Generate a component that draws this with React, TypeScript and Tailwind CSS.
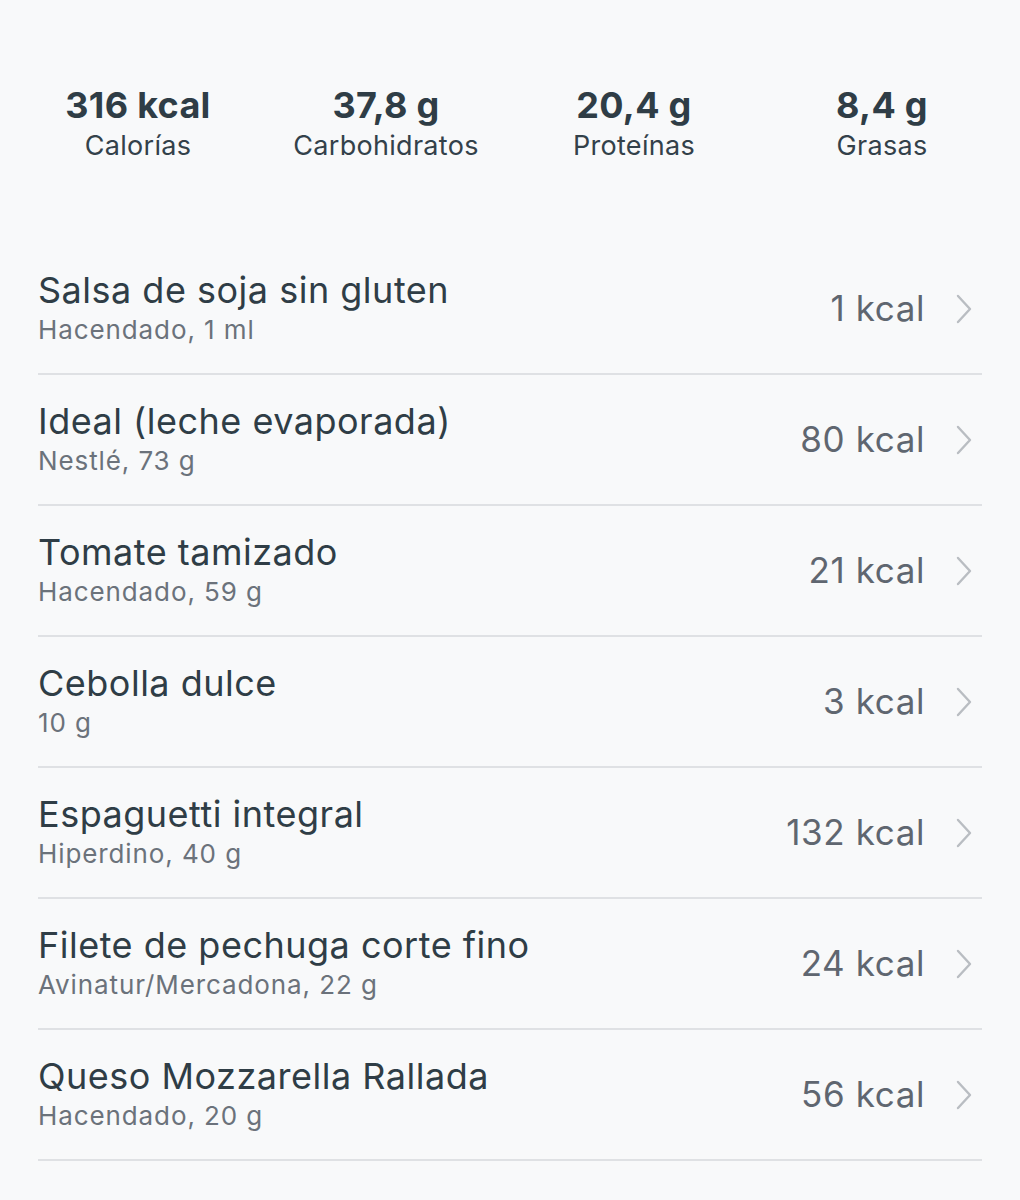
const stats = [
  { value: "316 kcal", label: "Calorías" },
  { value: "37,8 g", label: "Carbohidratos" },
  { value: "20,4 g", label: "Proteínas" },
  { value: "8,4 g", label: "Grasas" },
];

const items = [
  { name: "Salsa de soja sin gluten", detail: "Hacendado, 1 ml", kcal: "1 kcal" },
  { name: "Ideal (leche evaporada)", detail: "Nestlé, 73 g", kcal: "80 kcal" },
  { name: "Tomate tamizado", detail: "Hacendado, 59 g", kcal: "21 kcal" },
  { name: "Cebolla dulce", detail: "10 g", kcal: "3 kcal" },
  { name: "Espaguetti integral", detail: "Hiperdino, 40 g", kcal: "132 kcal" },
  { name: "Filete de pechuga corte fino", detail: "Avinatur/Mercadona, 22 g", kcal: "24 kcal" },
  { name: "Queso Mozzarella Rallada", detail: "Hacendado, 20 g", kcal: "56 kcal" },
];

const Chevron = () => (
  <svg width="18" height="30" viewBox="0 0 18 30" fill="none" className="ml-[30px] mr-[9px]">
    <polyline
      points="3,2 15,15 3,28"
      stroke="#b9bdc2"
      strokeWidth="2.4"
      strokeLinecap="round"
      strokeLinejoin="round"
    />
  </svg>
);

export default function App() {
  return (
    <div className="min-h-[1200px] w-[1020px] bg-[#f8f9fa] font-['Inter','Noto_Sans',sans-serif]">
      {/* Macros */}
      <div className="grid grid-cols-4 px-[14px] pt-[82px] pb-[80px]">
        {stats.map((s) => (
          <div key={s.label} className="flex flex-col items-center">
            <span className="text-[36px] leading-[46px] font-bold tracking-[0.3px] text-[#2f3d46]">
              {s.value}
            </span>
            <span className="text-[27px] leading-[36px] tracking-[0.3px] text-[#33414a]">{s.label}</span>
          </div>
        ))}
      </div>

      {/* Ingredients */}
      <div className="px-[38px]">
        {items.map((it) => (
          <div
            key={it.name}
            className="flex h-[131px] items-center justify-between border-b-2 border-[#dfe1e4]"
          >
            <div className="flex flex-col pt-[2px]">
              <span className="text-[36px] leading-[40px] tracking-[0.5px] text-[#2f3d46]">{it.name}</span>
              <span className="text-[26px] leading-[40px] tracking-[0.9px] text-[#6b727b]">{it.detail}</span>
            </div>
            <div className="flex items-center">
              <span className="text-[35px] tracking-[0.6px] text-[#5f6670]">{it.kcal}</span>
              <Chevron />
            </div>
          </div>
        ))}
      </div>
    </div>
  );
}
